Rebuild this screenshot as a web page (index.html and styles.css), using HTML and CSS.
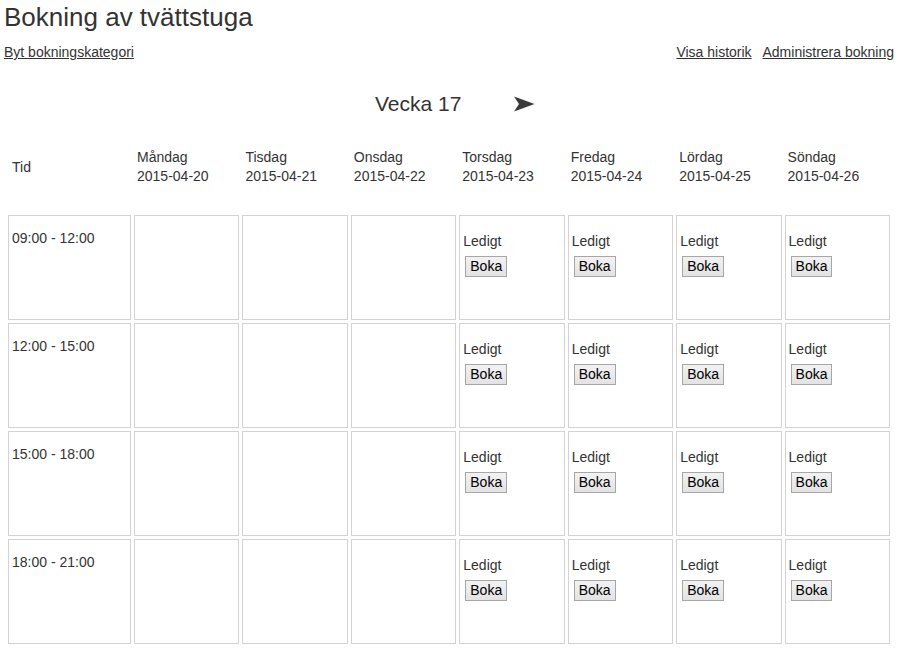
FILE: index.html
```html
<!DOCTYPE html>
<html>
<head>
<meta charset="utf-8">
<title>Bokning av tvättstuga</title>
<link rel="stylesheet" href="styles.css">
</head>
<body>
<div class="top">
  <h1 class="title">Bokning av tvättstuga</h1>
  <div class="links">
    <a href="#">Byt bokningskategori</a>
    <span class="right">
      <a href="#">Visa historik</a>
      <a href="#">Administrera bokning</a>
    </span>
  </div>
</div>

<div class="week">
  <span class="week-label">Vecka 17</span>
  <a href="#" class="next">
    <svg width="21" height="16" viewBox="0 0 21 16"><polygon points="0,0.5 20.5,8 0,15.5 5,8" fill="#3a3a3a"/></svg>
  </a>
</div>

<div class="head">
  <div class="head-tid">Tid</div>
  <div class="day">Måndag<br>2015-04-20</div>
  <div class="day">Tisdag<br>2015-04-21</div>
  <div class="day">Onsdag<br>2015-04-22</div>
  <div class="day">Torsdag<br>2015-04-23</div>
  <div class="day">Fredag<br>2015-04-24</div>
  <div class="day">Lördag<br>2015-04-25</div>
  <div class="day">Söndag<br>2015-04-26</div>
</div>

<div class="grid">
  <div class="cell time">09:00 - 12:00</div>
  <div class="cell"></div><div class="cell"></div><div class="cell"></div>
  <div class="cell slot">Ledigt<br><button>Boka</button></div>
  <div class="cell slot">Ledigt<br><button>Boka</button></div>
  <div class="cell slot">Ledigt<br><button>Boka</button></div>
  <div class="cell slot">Ledigt<br><button>Boka</button></div>

  <div class="cell time">12:00 - 15:00</div>
  <div class="cell"></div><div class="cell"></div><div class="cell"></div>
  <div class="cell slot">Ledigt<br><button>Boka</button></div>
  <div class="cell slot">Ledigt<br><button>Boka</button></div>
  <div class="cell slot">Ledigt<br><button>Boka</button></div>
  <div class="cell slot">Ledigt<br><button>Boka</button></div>

  <div class="cell time">15:00 - 18:00</div>
  <div class="cell"></div><div class="cell"></div><div class="cell"></div>
  <div class="cell slot">Ledigt<br><button>Boka</button></div>
  <div class="cell slot">Ledigt<br><button>Boka</button></div>
  <div class="cell slot">Ledigt<br><button>Boka</button></div>
  <div class="cell slot">Ledigt<br><button>Boka</button></div>

  <div class="cell time">18:00 - 21:00</div>
  <div class="cell"></div><div class="cell"></div><div class="cell"></div>
  <div class="cell slot">Ledigt<br><button>Boka</button></div>
  <div class="cell slot">Ledigt<br><button>Boka</button></div>
  <div class="cell slot">Ledigt<br><button>Boka</button></div>
  <div class="cell slot">Ledigt<br><button>Boka</button></div>
</div>
</body>
</html>
```

FILE: styles.css
```css
body {
    margin: 0;
    padding: 0 8px;
    font-family: "Liberation Sans", Arial, sans-serif;
    font-size: 14px;
    color: #333;
    background: #fff;
}
.top {
    margin-left: -4px;
}
.title {
    margin: 2px 0 0 0;
    font-size: 26px;
    font-weight: normal;
    line-height: 30px;
}
.links {
    display: flex;
    justify-content: space-between;
    margin-top: 12px;
    line-height: 17px;
}
.links a {
    color: #333;
}
.right a {
    margin-left: 7px;
}
.week {
    display: flex;
    align-items: center;
    margin-top: 31px;
    padding-left: 367px;
    height: 24px;
}
.week-label {
    font-size: 21px;
    line-height: 24px;
}
.next {
    display: flex;
    margin-left: 53px;
}
.head {
    display: grid;
    grid-template-columns: 123px repeat(7, 1fr);
    column-gap: 3px;
    align-items: center;
    margin: 32px 4px 0 0;
    line-height: 19px;
}
.head-tid {
    padding-left: 4px;
}
.day {
    padding-left: 3px;
}
.grid {
    display: grid;
    grid-template-columns: 123px repeat(7, 1fr);
    grid-auto-rows: 105px;
    gap: 3px;
    margin: 29px 4px 0 0;
}
.cell {
    border: 1px solid #d3d3d3;
    line-height: 16px;
}
.time {
    padding: 14px 0 0 3px;
}
.slot {
    padding: 17px 0 0 3px;
}
.slot button {
    margin: 7px 0 0 2px;
    padding: 1px 4px 2px;
    font-family: "Liberation Sans", Arial, sans-serif;
    font-size: 14px;
    color: #000;
    background: linear-gradient(#f2f2f2, #e3e3e3);
    border: 1px solid #a6a6a6;
    border-radius: 0;
    line-height: 16px;
}
```
